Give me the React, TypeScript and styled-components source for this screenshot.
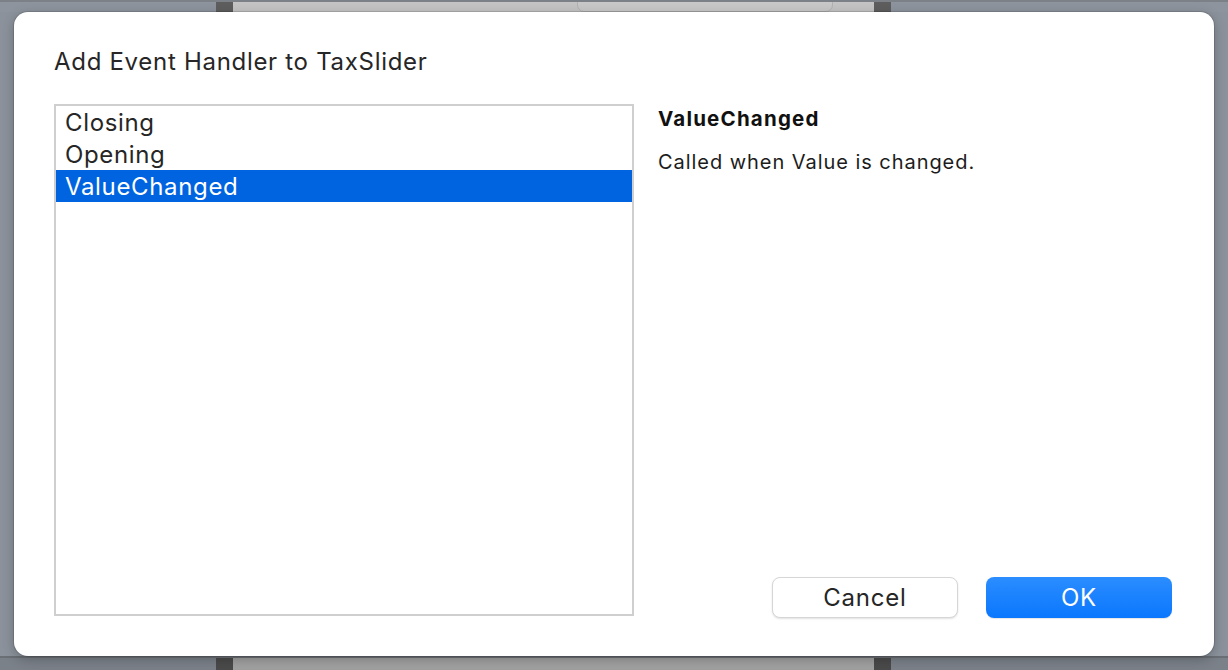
import styled, { createGlobalStyle } from "styled-components";

const GlobalStyle = createGlobalStyle`
  html, body {
    margin: 0;
    padding: 0;
    background: #8b929b;
    overflow: hidden;
  }
  * {
    box-sizing: border-box;
  }
`;

const fontStack = `Inter, "Open Sans", "Liberation Sans", sans-serif`;

const Screen = styled.div`
  width: 100vw;
  height: 670px;
  display: flex;
  flex-direction: column;
  font-family: ${fontStack};
`;

const Strip = styled.div<{ $height: number; $bottom?: boolean }>`
  height: ${(p) => p.$height}px;
  flex: none;
  display: flex;
  border-top: 2px solid ${(p) => (p.$bottom ? "#6a6f75" : "#7c8188")};
  background: ${(p) => (p.$bottom ? "#7b8189" : "#8d949d")};
`;

const Segment = styled.div<{ $width?: number; $color: string }>`
  ${(p) => (p.$width ? `width: ${p.$width}px; flex: none;` : "flex: 1;")}
  background: ${(p) => p.$color};
  display: flex;
  overflow: hidden;
`;

const Tab = styled.div`
  width: 256px;
  margin-left: 344px;
  margin-top: -8px;
  height: 18px;
  border: 1px solid #b2b2b2;
  border-radius: 7px;
  background: #c8c8c8;
`;

const Dialog = styled.div`
  position: relative;
  flex: 1;
  margin: 0 14px;
  background: #ffffff;
  border-radius: 14px;
  box-shadow: 0 0 0 1px rgba(0, 0, 0, 0.12), 0 3px 12px rgba(0, 0, 0, 0.25);
  padding: 36px 42px 40px 40px;
  display: flex;
  flex-direction: column;
`;

const Title = styled.div`
  font-size: 24px;
  line-height: 28px;
  letter-spacing: 0.7px;
  color: #262626;
  margin-bottom: 28px;
`;

const Body = styled.div`
  flex: 1;
  display: flex;
  gap: 24px;
  min-height: 0;
`;

const ListBox = styled.div`
  width: 580px;
  flex: none;
  border: 2px solid #cfcfcf;
  background: #fff;
  display: flex;
  flex-direction: column;
`;

const ListRow = styled.div<{ $selected?: boolean }>`
  height: 32px;
  padding: 1px 0 0 9px;
  font-size: 24px;
  line-height: 31px;
  letter-spacing: 0.65px;
  color: ${(p) => (p.$selected ? "#ffffff" : "#262626")};
  background: ${(p) => (p.$selected ? "#0064e1" : "transparent")};
`;

const Side = styled.div`
  flex: 1;
  display: flex;
  flex-direction: column;
`;

const InfoName = styled.div`
  font-size: 20.5px;
  font-weight: 700;
  line-height: 24px;
  letter-spacing: 1.2px;
  color: #111111;
  padding-top: 3px;
  margin-bottom: 19px;
`;

const InfoText = styled.div`
  font-size: 20px;
  line-height: 24px;
  letter-spacing: 0.95px;
  color: #1c1c1c;
`;

const Buttons = styled.div`
  margin-top: auto;
  margin-bottom: -2px;
  display: flex;
  justify-content: flex-end;
  gap: 28px;
`;

const Button = styled.button<{ $primary?: boolean }>`
  width: 186px;
  height: 41px;
  border-radius: 8px;
  font-family: ${fontStack};
  font-size: 24px;
  letter-spacing: 0.8px;
  padding: 0;
  cursor: pointer;
  color: ${(p) => (p.$primary ? "#ffffff" : "#262626")};
  border: ${(p) => (p.$primary ? "none" : "1px solid #d6d6d6")};
  background: ${(p) =>
    p.$primary
      ? "linear-gradient(180deg, #2b8dff 0%, #0a77fd 100%)"
      : "#ffffff"};
  box-shadow: ${(p) =>
    p.$primary
      ? "0 1px 1px rgba(0, 0, 0, 0.1)"
      : "0 1px 2px rgba(0, 0, 0, 0.12)"};
`;

const events = ["Closing", "Opening", "ValueChanged"];

export default function App() {
  const selected = "ValueChanged";
  return (
    <>
      <GlobalStyle />
      <Screen>
        <Strip $height={12}>
          <Segment $width={216} $color="#8d949d" />
          <Segment $width={17} $color="#5e5e5e" />
          <Segment $width={641} $color="#c4c4c4">
            <Tab />
          </Segment>
          <Segment $width={17} $color="#5e5e5e" />
          <Segment $color="#8d949d" />
        </Strip>
        <Dialog>
          <Title>Add Event Handler to TaxSlider</Title>
          <Body>
            <ListBox>
              {events.map((e) => (
                <ListRow key={e} $selected={e === selected}>
                  {e}
                </ListRow>
              ))}
            </ListBox>
            <Side>
              <InfoName>ValueChanged</InfoName>
              <InfoText>Called when Value is changed.</InfoText>
              <Buttons>
                <Button>Cancel</Button>
                <Button $primary>OK</Button>
              </Buttons>
            </Side>
          </Body>
        </Dialog>
        <Strip $height={14} $bottom>
          <Segment $width={216} $color="#7b8189" />
          <Segment $width={17} $color="#4a4a4a" />
          <Segment $width={641} $color="#a0a0a0" />
          <Segment $width={17} $color="#4a4a4a" />
          <Segment $color="#7b8189" />
        </Strip>
      </Screen>
    </>
  );
}
